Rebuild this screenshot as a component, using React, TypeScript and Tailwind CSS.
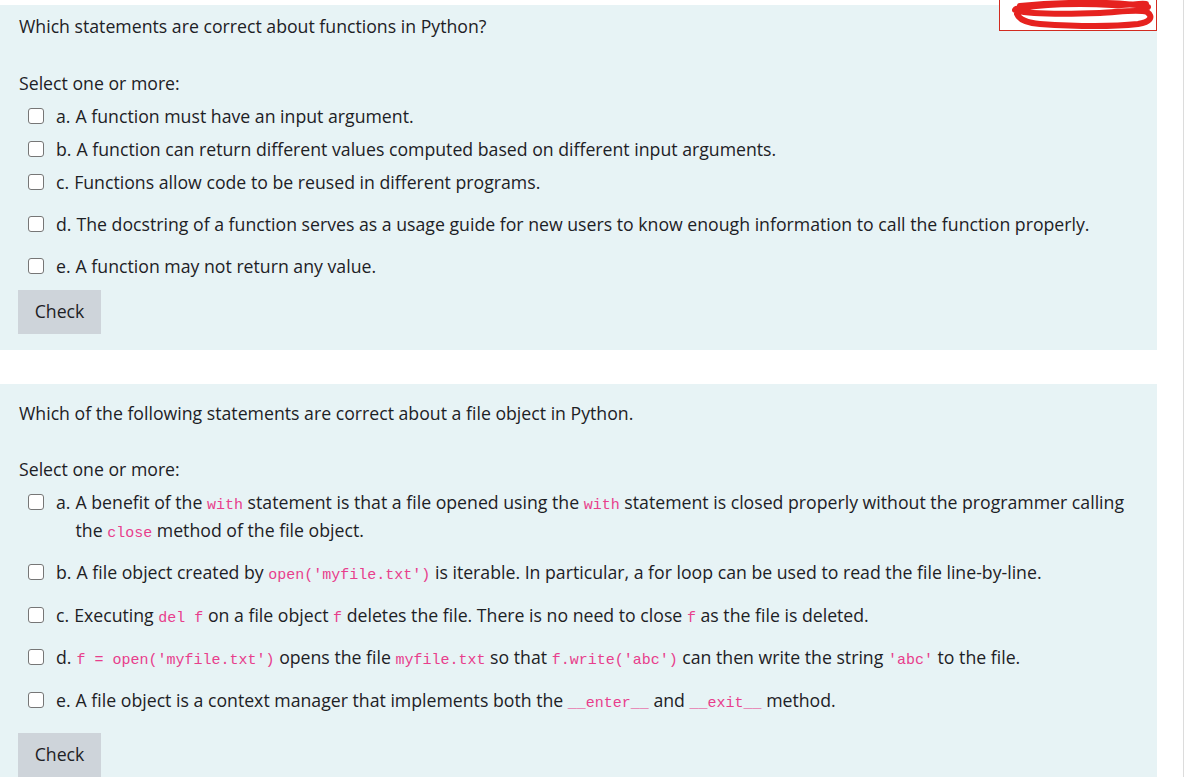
import type { ReactNode } from 'react';

const code = 'font-["Liberation_Mono","DejaVu_Sans_Mono",monospace] text-[15px] leading-none text-[#e83e8c]';

function C({ children }: { children: ReactNode }) {
  return <code className={code}>{children}</code>;
}

interface Opt {
  key: string;
  body: ReactNode;
  mt: string;
}

function Option({ opt }: { opt: Opt }) {
  return (
    <div className={`flex items-start pl-[10px] ${opt.mt}`}>
      <span className="mt-[6px] w-4 h-4 shrink-0 rounded-[3px] border border-[#767676] bg-white" />
      <div className="flex ml-[12px]">
        <span className="shrink-0 pr-[5px]">{opt.key}.</span>
        <div>{opt.body}</div>
      </div>
    </div>
  );
}

function CheckButton({ mt }: { mt: string }) {
  return (
    <button className={`${mt} block w-[83px] h-[44px] bg-[#ced4da] text-[#1d2125] text-[17.7px] leading-none`}>
      Check
    </button>
  );
}

const q1: Opt[] = [
  { key: 'a', mt: 'mt-[5px]', body: 'A function must have an input argument.' },
  { key: 'b', mt: 'mt-[5px]', body: 'A function can return different values computed based on different input arguments.' },
  { key: 'c', mt: 'mt-[5px]', body: 'Functions allow code to be reused in different programs.' },
  {
    key: 'd',
    mt: 'mt-[14px]',
    body: 'The docstring of a function serves as a usage guide for new users to know enough information to call the function properly.',
  },
  { key: 'e', mt: 'mt-[14px]', body: 'A function may not return any value.' },
];

const q2: Opt[] = [
  {
    key: 'a',
    mt: 'mt-[5px]',
    body: (
      <>
        A benefit of the <C>with</C> statement is that a file opened using the <C>with</C> statement is closed properly
        without the programmer calling the <C>close</C> method of the file object.
      </>
    ),
  },
  {
    key: 'b',
    mt: 'mt-[14px]',
    body: (
      <>
        A file object created by <C>open('myfile.txt')</C> is iterable. In particular, a for loop can be used to read
        the file line-by-line.
      </>
    ),
  },
  {
    key: 'c',
    mt: 'mt-[15px]',
    body: (
      <>
        Executing <C>del f</C> on a file object <C>f</C> deletes the file. There is no need to close <C>f</C> as the
        file is deleted.
      </>
    ),
  },
  {
    key: 'd',
    mt: 'mt-[14px]',
    body: (
      <>
        <C>f = open('myfile.txt')</C> opens the file <C>myfile.txt</C> so that <C>f.write('abc')</C> can then write
        the string <C>'abc'</C> to the file.
      </>
    ),
  },
  {
    key: 'e',
    mt: 'mt-[15px]',
    body: (
      <>
        A file object is a context manager that implements both the <C>__enter__</C> and <C>__exit__</C> method.
      </>
    ),
  },
];

export default function App() {
  return (
    <div className='flex h-[777px] overflow-hidden bg-white font-["Open_Sans","Noto_Sans",sans-serif] text-[17.7px] leading-[28px] text-[#1d2125]'>
      <div className="w-[1157px] shrink-0 relative">
        {/* redacted box */}
        <div className="absolute top-0 left-[999px] w-[158px] h-[31px] border border-[#d22b20] border-t-0 bg-white z-10">
          <svg className="absolute inset-0" width="158" height="31" viewBox="0 0 158 31">
            <path
              d="M16 9 C40 4, 80 3, 112 5 C128 6, 138 3, 146 4 M15 10 C30 15, 70 14, 100 13 C120 12, 138 9, 147 12 C154 17, 150 22, 138 24 C110 27, 70 26, 40 24 C27 23, 19 19, 17 14 M20 6 C60 2, 120 1, 148 7"
              fill="none"
              stroke="#e6221f"
              strokeWidth="6"
              strokeLinecap="round"
              strokeLinejoin="round"
            />
          </svg>
        </div>

        <div className="mt-[5px] bg-[#e7f3f5] pl-[18px] pt-[7px] pb-[16px]">
          <p className="pl-px">Which statements are correct about functions in Python?</p>
          <p className="pl-px mt-[29px]">Select one or more:</p>
          {q1.map((o) => (
            <Option key={o.key} opt={o} />
          ))}
          <CheckButton mt="mt-[10px]" />
        </div>

        <div className="mt-[34px] bg-[#e7f3f5] pl-[18px] pr-[20px] pt-[15px] pb-[16px]">
          <p className="pl-px">Which of the following statements are correct about a file object in Python.</p>
          <p className="pl-px mt-[28px]">Select one or more:</p>
          {q2.map((o) => (
            <Option key={o.key} opt={o} />
          ))}
          <CheckButton mt="mt-[19px]" />
        </div>
      </div>
      <div className="ml-[26px] w-px h-full bg-[#dcdcdc]" />
    </div>
  );
}
